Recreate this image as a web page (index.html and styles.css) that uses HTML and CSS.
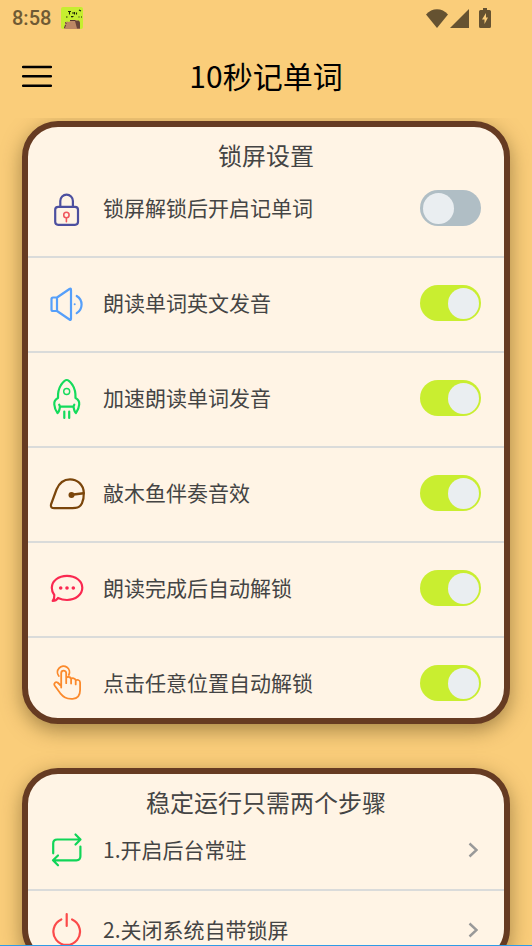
FILE: index.html
```html
<!DOCTYPE html>
<html lang="zh-CN">
<head>
<meta charset="utf-8">
<meta name="viewport" content="width=device-width, initial-scale=1">
<title>10秒记单词</title>
<link rel="stylesheet" href="styles.css">
</head>
<body>
<div class="status">
  <span class="clock">8:58</span>
  <svg class="app-badge" viewBox="0 0 22 22" aria-hidden="true">
    <rect width="22" height="22" rx="2" fill="#c6ee30"/>
    <path d="M7 4.500h3M8.500 4.500v3M11 6h2M13.500 5v2.500M15.500 5.500v2M18 3l2 1M5 10h1.500M10 9.500h2.500M11 9v1.500M17.500 10h1M20 10h1" stroke="#1c2408" stroke-width="1.100" fill="none"/>
    <path d="M3 22l1-4v-2.500l2-1 2 .5 3-2h4l3 1 1 2v6z" fill="#bd8865"/>
    <path d="M14 14l4-.5 1 2v6h-3z" fill="#684438"/>
    <path d="M4 15.500l1.500 1M9 13.500h5.500M3.500 21l1-3" stroke="#54382e" stroke-width="1"/>
  </svg>
  <span class="indicators">
    <svg class="wifi" viewBox="0 0 22 19" aria-hidden="true"><path d="M11 19L0 5.500C6-1.500 16-1.500 22 5.500z"/></svg>
    <svg class="signal" viewBox="0 0 19 19" aria-hidden="true"><path d="M19 0v19H0z"/></svg>
    <svg class="battery" viewBox="0 0 12 20" aria-hidden="true"><path fill-rule="evenodd" d="M4 0h4v2h2.500Q12 2 12 3.500v15q0 1.500-1.500 1.500h-9Q0 20 0 18.500v-15Q0 2 1.500 2H4zM7 5l-4 6.500h2.500V16L9 9.500H7z"/></svg>
  </span>
</div>
<header class="topbar">
  <button class="menu" type="button" aria-label="菜单">
    <svg viewBox="0 0 30 24" aria-hidden="true"><path d="M1 3h28M1 12.300h28M1 21.800h28"/></svg>
  </button>
  <h1>10秒记单词</h1>
</header>
<main class="content">
  <section class="card">
    <h2>锁屏设置</h2>
    <ul class="rows">
      <li><label class="row">
        <svg class="icon lock" viewBox="0 0 36 40" aria-hidden="true"><rect x="6.200" y="18.800" width="22.800" height="18" rx="3"/><path d="M11.300 18.500v-5.500a6.300 6.300 0 0 1 12.600 0v5.500"/><g class="keyhole"><circle cx="17.400" cy="27" r="2.700"/><path d="M17.400 30v3.800"/></g></svg>
        <span class="text">锁屏解锁后开启记单词</span>
        <input class="switch" type="checkbox" role="switch">
      </label></li>
      <li><label class="row">
        <svg class="icon speaker" viewBox="0 0 36 40" aria-hidden="true"><path d="M8 14.500H4Q2.500 14.500 2.500 16v10.500Q2.500 28 4 28h4zM8 14.500L20.500 6Q22 5 22 7v28.500q0 2-1.500 1L8 28M27.700 13c6.500 4 6.500 13 0 17.200"/><circle class="dot" cx="25.700" cy="21.300" r="1"/></svg>
        <span class="text">朗读单词英文发音</span>
        <input class="switch" type="checkbox" role="switch" checked>
      </label></li>
      <li><label class="row">
        <svg class="icon rocket" viewBox="0 0 36 40" aria-hidden="true"><path d="M17.700 2Q20 2 23.500 7c3 4.500 3.200 8 3 13 3 1.500 4 4 3.700 6.500-.2 3-1.500 6-3.200 8.500-1.500-1-2-3.500-2.500-6.300H11c-.5 3-1 5.300-2.500 6.300C6.500 32.500 5.500 29.500 5.300 26.500 5 24 6 21.500 9 20c-.2-5 0-8.500 3-13 3.500-5 5.700-5 5.700-5zM11 28.700l-.8-2M24.500 28.700l.8-2"/><circle class="window" cx="17.700" cy="13.500" r="3"/><path d="M15.300 33.500V40M20.200 33.500V40"/></svg>
        <span class="text">加速朗读单词发音</span>
        <input class="switch" type="checkbox" role="switch" checked>
      </label></li>
      <li><label class="row">
        <svg class="icon woodfish" viewBox="0 0 36 40" aria-hidden="true"><path d="M2 31.500L7.500 16.500C10.500 9 15 6.300 21 6.300c7 0 13.500 5 13.800 13.500.2 8-2.300 15-8.300 15-7 .5-14 .4-21 .4q-4.500-.2-3.500-3.700z"/><path class="mouth" d="M22.700 21.800l11.800-1.500"/><circle class="dot" cx="22.500" cy="22" r="3"/></svg>
        <span class="text">敲木鱼伴奏音效</span>
        <input class="switch" type="checkbox" role="switch" checked>
      </label></li>
      <li><label class="row">
        <svg class="icon bubble" viewBox="0 0 36 40" aria-hidden="true"><path d="M18 7.800c8.600 0 15.300 5.200 15.300 12S26.600 32 18 32c-3.500 0-6.500-.8-9-2-1.200 2-3 3-5.300 3 1.300-1.800 1.800-3.800 1.600-6-1.700-2-2.500-4.500-2.500-7.200 0-6.800 6.700-12 15.200-12z"/><g class="dot"><circle cx="11.700" cy="20" r="1.800"/><circle cx="18" cy="20" r="1.800"/><circle cx="24.300" cy="20" r="1.800"/></g></svg>
        <span class="text">朗读完成后自动解锁</span>
        <input class="switch" type="checkbox" role="switch" checked>
      </label></li>
      <li><label class="row">
        <svg class="icon tap" viewBox="0 0 36 40" aria-hidden="true"><path d="M9.800 13a6 6 0 1 1 10-1M12.200 24.500V10.200a2.500 2.500 0 0 1 5 0v10M17.200 15c1-1.600 4.500-1.400 4.900 1v4.500M22.100 16c1-1.400 4.300-1 4.600 1.400v4M26.700 17.500c1-1.200 4.400-.8 4.400 2v7.500c0 4.500-2 8.500-7.500 8.800-7 .3-9-1.800-12.300-5.500L5.600 22.500c-1.300-2.200 1-4 3-3l3.600 3.500"/></svg>
        <span class="text">点击任意位置自动解锁</span>
        <input class="switch" type="checkbox" role="switch" checked>
      </label></li>
    </ul>
  </section>
  <section class="card compact">
    <h2>稳定运行只需两个步骤</h2>
    <ul class="rows">
      <li><a class="row" href="#background">
        <svg class="icon repeat" viewBox="0 0 36 40" aria-hidden="true"><path d="M4.200 23.300V13.500q0-4 4-4H31M26.500 4.500l5 5-5 5M31.400 16.500v9.800q0 4-4 4H4.500M9 25.500l-5 4.800 5 5"/></svg>
        <span class="text">1.开启后台常驻</span>
        <svg class="chevron" viewBox="0 0 16 16" aria-hidden="true"><path d="M4.500 1.500L11.500 8l-7 6.500"/></svg>
      </a></li>
      <li><a class="row" href="#lockscreen">
        <svg class="icon power" viewBox="0 0 36 40" aria-hidden="true"><path d="M12.300 9.500a13.300 13.300 0 1 0 10.800 0M17.700 4v12"/></svg>
        <span class="text">2.关闭系统自带锁屏</span>
        <svg class="chevron" viewBox="0 0 16 16" aria-hidden="true"><path d="M4.500 1.500L11.500 8l-7 6.500"/></svg>
      </a></li>
    </ul>
  </section>
</main>
</body>
</html>
```
FILE: styles.css
```css
* {
  box-sizing: border-box;
}

body {
  margin: 0;
  height: 100vh;
  display: flex;
  flex-direction: column;
  overflow: hidden;
  background: #facd7a;
  border-bottom: 1px solid #2f9be6;
  color: #444;
  font-family: "Noto Sans CJK SC", sans-serif;
}

h1, h2, ul {
  margin: 0;
  padding: 0;
  font-weight: 400;
}

ul {
  list-style: none;
}

.status {
  flex: none;
  height: 36px;
  padding: 0 41px 0 12px;
  display: flex;
  align-items: center;
  color: #6f5a34;
  font: 500 20px/24px Roboto, sans-serif;
}

.app-badge {
  width: 22px;
  height: 22px;
  margin-left: 10px;
}

.indicators {
  margin-left: auto;
  display: flex;
  align-items: center;
  fill: #655231;
}

.wifi {
  width: 22px;
  height: 19px;
}

.signal {
  width: 19px;
  height: 19px;
  margin: 0 10px 0 2px;
}

.battery {
  width: 12px;
  height: 20px;
}

.topbar {
  flex: none;
  height: 82px;
  padding: 0 22px 4px;
  display: grid;
  grid-template-columns: 30px 1fr 30px;
  align-items: center;
  color: #000;
}

.topbar h1 {
  font-size: 30px;
  line-height: 40px;
  text-align: center;
}

.menu {
  padding: 2px 0 0;
  border: 0;
  background: none;
}

.menu svg {
  display: block;
  width: 30px;
  height: 24px;
  stroke: #000;
  stroke-width: 2.4;
  stroke-linecap: round;
}

.content {
  flex: 1;
  min-height: 0;
  overflow: hidden;
  padding: 3px 22px;
}

.card {
  margin-bottom: 44px;
  padding-top: 16px;
  overflow: hidden;
  border: 6px solid #663b22;
  border-radius: 36px;
  background: #fff4e5;
  box-shadow: 0 6px 20px rgba(80, 60, 20, 0.5);
}

.card h2 {
  font-size: 24px;
  line-height: 24px;
  text-align: center;
}

.row {
  display: flex;
  align-items: center;
  padding: 25px 23px 28px 21px;
  color: inherit;
  font-size: 21px;
  text-decoration: none;
}

.rows li + li {
  border-top: 2px solid #dadbda;
}

.rows li:first-child .row {
  padding-top: 21px;
}

.rows li:last-child .row {
  padding-bottom: 15px;
}

.compact .row {
  padding-top: 19px;
  padding-bottom: 19px;
}

.compact li:first-child .row {
  padding-top: 16px;
}

.compact li:last-child .row {
  padding-bottom: 9px;
}

.icon {
  flex: none;
  width: 36px;
  height: 40px;
  margin-right: 18px;
  overflow: visible;
  fill: none;
  stroke: currentColor;
  stroke-width: 2.2;
  stroke-linecap: round;
  stroke-linejoin: round;
}

.icon .dot {
  fill: currentColor;
  stroke: none;
}

.lock { color: #4c4f9f; }
.keyhole { stroke: #f0585f; stroke-width: 1.6; }
.speaker { color: #559ffa; }
.rocket { color: #14db5c; }
.window { stroke-width: 1.4; }
.woodfish { color: #7b460b; }
.mouth { stroke-width: 2.6; }
.bubble { color: #fa2850; }
.tap { color: #fb8a2c; stroke-width: 1.8; }
.repeat { color: #10d558; }
.power { color: #fb4a4a; }

.text {
  flex: 1;
  padding-bottom: 2px;
  line-height: 38px;
}

.switch {
  appearance: none;
  flex: none;
  width: 61px;
  height: 36px;
  margin: 0;
  padding: 0 2px 0 3px;
  display: flex;
  align-items: center;
  border-radius: 18px;
  background: #b0bec5;
}

.switch::before {
  content: "";
  width: 31px;
  height: 31px;
  border-radius: 50%;
  background: #eaeef1;
}

.switch:checked {
  justify-content: flex-end;
  background: #c9ee30;
}

.chevron {
  flex: none;
  width: 16px;
  height: 16px;
  fill: none;
  stroke: #999;
  stroke-width: 2.4;
}
```
